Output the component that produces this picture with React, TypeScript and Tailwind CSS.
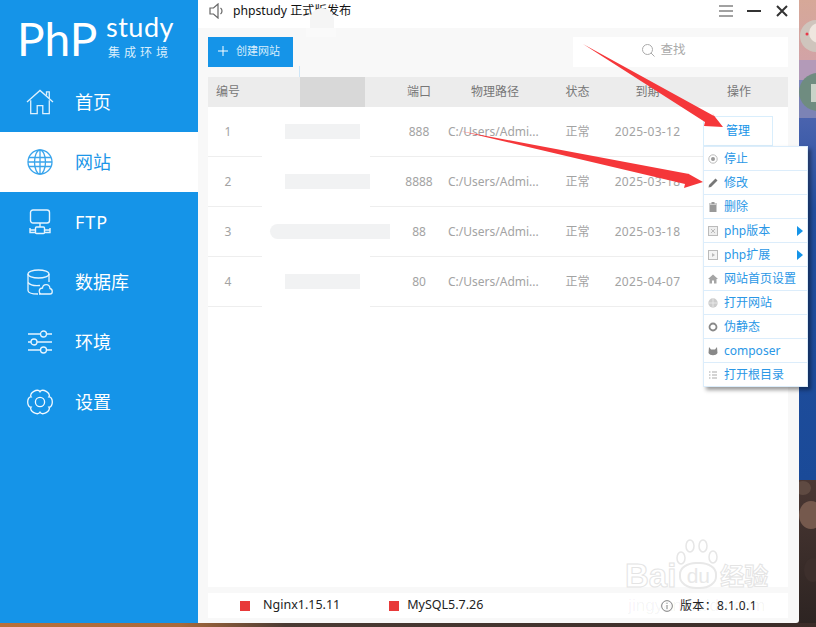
import React from "react";

const cjk = "font-['Noto_Sans','Noto_Sans_CJK_SC',sans-serif]";

const rows = [
  { id: 1, port: "888", date: "2025-03-12", patch: "ml-[37px] w-[75px]" },
  { id: 2, port: "8888", date: "2025-03-18", patch: "ml-[37px] w-[85px]" },
  { id: 3, port: "88", date: "2025-03-18", patch: "ml-[22px] w-[120px] rounded-l-full" },
  { id: 4, port: "80", date: "2025-04-07", patch: "ml-[37px] w-[75px]" },
];

const cols = "grid grid-cols-[40px_150px_42px_110px_55px_85px_98px] items-center";

function HomeIcon() {
  return (
    <svg width="28" height="26" viewBox="0 0 30 28" fill="none" stroke="#dff1fd" strokeWidth="1.4">
      <path d="M1 14 L15 1.5 L29 14" />
      <path d="M22 7 V3 H25 V10" />
      <path d="M5 12 V26.5 H12 V18 H18 V26.5 H25 V12" />
    </svg>
  );
}

function GlobeIcon() {
  return (
    <svg width="26" height="26" viewBox="0 0 26 26" fill="none" stroke="#3aa5ec" strokeWidth="1.3">
      <circle cx="13" cy="13" r="12" />
      <ellipse cx="13" cy="13" rx="5.5" ry="12" />
      <path d="M13 1 V25 M2 8.5 H24 M1 13 H25 M2 17.5 H24" />
    </svg>
  );
}

function FtpIcon() {
  return (
    <svg width="22" height="26" viewBox="0 0 22 26" fill="none" stroke="#e6f4fe" strokeWidth="1.4">
      <rect x="1.5" y="1" width="19" height="13" rx="2.5" />
      <path d="M11 14 V18" />
      <rect x="6.5" y="18" width="9" height="6.5" rx="1" />
      <path d="M6.5 21 H1 M15.5 21 H21" />
      <path d="M1 19 V23.5 H6.5 M21 19 V23.5 H15.5" />
    </svg>
  );
}

function DatabaseIcon() {
  return (
    <svg width="26" height="26" viewBox="0 0 26 26" fill="none" stroke="#e6f4fe" strokeWidth="1.3">
      <ellipse cx="11.5" cy="5" rx="10.5" ry="4" />
      <path d="M1 5 V21.5 C1 23.5 5 25 11 25" />
      <path d="M22 5 V13" />
      <path d="M1 13.5 C3 16 8 17 13 16.5" />
      <path d="M12 25 H23 C26 25 26 20 23 19.5 C22.5 14.5 16 14.5 15.5 19 C11.5 19 11 25 15 25" />
    </svg>
  );
}

function SlidersIcon() {
  return (
    <svg width="26" height="24" viewBox="0 0 26 24" fill="none" stroke="#e6f4fe" strokeWidth="1.3">
      <path d="M1 4 H13 M20 4 H25 M1 12 H4 M10 12 H25 M1 20 H13 M20 20 H25" />
      <circle cx="16.5" cy="4" r="3" />
      <circle cx="7" cy="12" r="3" />
      <circle cx="16.5" cy="20" r="3" />
    </svg>
  );
}

function polar(radius: number, deg: number) {
  const a = (deg * Math.PI) / 180;
  return `${(14 + radius * Math.cos(a)).toFixed(2)} ${(13 + radius * Math.sin(a)).toFixed(2)}`;
}

function GearIcon() {
  const lobes = [0, 60, 120, 180, 240, 300];
  const d =
    `M${polar(10.3, -30)} ` +
    lobes.map((a) => `C${polar(14.5, a - 22)} ${polar(14.5, a + 22)} ${polar(10.3, a + 30)}`).join(" ") +
    " Z";
  return (
    <svg width="28" height="26" viewBox="0 0 28 26" fill="none" stroke="#f2f9ff" strokeWidth="1.3">
      <path d={d} />
      <circle cx="14" cy="13" r="4.6" />
    </svg>
  );
}

const nav = [
  { label: "首页", icon: <HomeIcon /> },
  { label: "网站", icon: <GlobeIcon />, active: true },
  { label: "FTP", icon: <FtpIcon /> },
  { label: "数据库", icon: <DatabaseIcon /> },
  { label: "环境", icon: <SlidersIcon /> },
  { label: "设置", icon: <GearIcon /> },
];

function Sidebar() {
  return (
    <aside className="w-[198px] shrink-0 bg-[#1594e8] text-white">
      <div className="flex h-[72px] pl-[17px]">
        <span className="mt-[11px] w-[89px] text-[46px] leading-[56px] font-['Lato',sans-serif]">PhP</span>
        <div className="flex flex-col">
          <span className="mt-[10px] text-[27px] leading-[34px] tracking-[0.5px] font-['Lato',sans-serif]">study</span>
          <span className={`${cjk} mt-[1px] ml-[2px] text-[12px] leading-[16px] tracking-[4px] text-[#d9eefc]`}>集成环境</span>
        </div>
      </div>
      {nav.map((item) => (
        <div
          key={item.label}
          className={`flex h-[60px] items-center ${item.active ? "bg-white text-[#1b96e8]" : ""}`}
        >
          <div className="flex w-[80px] shrink-0 justify-center pr-[1px]">{item.icon}</div>
          <span className={`${cjk} mt-[1px] -ml-[5px] text-[18px] ${item.label === "FTP" ? "tracking-[1px]" : ""}`}>{item.label}</span>
        </div>
      ))}
    </aside>
  );
}

function TitleBar() {
  return (
    <div className="flex h-[28px] items-center bg-white pb-[6px] pl-[11px]">
      <svg width="15" height="16" viewBox="0 0 15 16" fill="none" stroke="#666" strokeWidth="1.2">
        <path d="M1 5 H4.5 L9 1 V15 L4.5 11 H1 Z" />
        <path d="M11.5 5 C13.5 6.5 13.5 9.5 11.5 11" />
      </svg>
      <span className={`${cjk} ml-[9px] text-[12.2px] text-[#111]`}>phpstudy 正式版发布</span>
      <div className="ml-auto flex items-center pr-[11px]">
        <svg width="14" height="12" viewBox="0 0 14 12" stroke="#444" strokeWidth="1">
          <path d="M0 1 H14 M0 6 H14 M0 11 H14" />
        </svg>
        <div className="ml-[14px] h-[2px] w-[14px] bg-[#333]" />
        <svg className="ml-[15px]" width="12" height="12" viewBox="0 0 12 12" stroke="#333" strokeWidth="2">
          <path d="M1 1 L11 11 M11 1 L1 11" />
        </svg>
      </div>
    </div>
  );
}

function Toolbar() {
  return (
    <div className="flex h-[39px] items-end justify-between">
      <button className={`${cjk} flex h-[30px] w-[85px] items-center bg-[#1594e8] pb-[2px] pl-[10px] text-[11px] text-[#d9eefc]`}>
        <svg width="10" height="10" viewBox="0 0 10 10" stroke="#fff" strokeWidth="1">
          <path d="M5 0 V10 M0 5 H10" />
        </svg>
        <span className="ml-[8px]">创建网站</span>
      </button>
      <div className={`${cjk} flex h-[30px] w-[215px] items-center justify-center gap-[5px] bg-white pr-[33px] pb-[3px] text-[12.5px] text-[#aaa]`}>
        <svg width="13" height="13" viewBox="0 0 13 13" fill="none" stroke="#aaa" strokeWidth="1">
          <circle cx="5.5" cy="5.5" r="5" />
          <path d="M9 9 L12.5 12.5" />
        </svg>
        查找
      </div>
    </div>
  );
}

function Table() {
  return (
    <div className={`${cjk} mt-[10px] flex h-[510px] flex-col bg-white text-[12px] text-[#a3a3a3]`}>
      <div className={`${cols} h-[30px] shrink-0 bg-[#ececec] text-center text-[#777]`}>
        <span>编号</span>
        <span />
        <span>端口</span>
        <span>物理路径</span>
        <span>状态</span>
        <span>到期</span>
        <span>操作</span>
      </div>
      {rows.map((row) => (
        <div key={row.id} className={`${cols} h-[50px] shrink-0 border-b border-[#eeeeee] text-center`}>
          <span>{row.id}</span>
          <span className="relative z-10 flex">
            <span className={`h-[15px] ${row.patch} bg-[#f1f2f3]`} />
          </span>
          <span>{row.port}</span>
          <span className="truncate pr-[4px] pl-[8px] text-left">C:/Users/Admi...</span>
          <span>正常</span>
          <span className="tracking-[0.3px]">{row.date}</span>
          {row.id === 1 ? (
            <span className="mr-[2px] mb-[2px] flex h-[30px] w-[70px] items-center justify-center justify-self-center border border-[#d9eefc] text-[#1594e8]">
              管理
            </span>
          ) : (
            <span />
          )}
        </div>
      ))}
    </div>
  );
}

const greyIcon = { width: 10, height: 10, viewBox: "0 0 10 10", fill: "#999" };

const menu = [
  { label: "停止", icon: <svg {...greyIcon}><circle cx="5" cy="5" r="4.2" fill="none" stroke="#bbb" /><circle cx="5" cy="5" r="2" fill="#999" /></svg> },
  { label: "修改", icon: <svg {...greyIcon}><path d="M0.5 9.5 L1 7 L7.5 0.5 L9.5 2.5 L3 9 Z" fill="#777" /></svg> },
  { label: "删除", icon: <svg {...greyIcon}><path d="M1 1.5 H9 V2.5 H1 Z M3.5 0 H6.5 V1.5 H3.5 Z M1.5 3 H8.5 V10 H1.5 Z" fill="#999" /></svg> },
  { label: "php版本", more: true, icon: <svg {...greyIcon}><rect x="0.5" y="0.5" width="9" height="9" fill="#eee" stroke="#bbb" /><path d="M3 3 L7 7 M7 3 L3 7" stroke="#bbb" /></svg> },
  { label: "php扩展", more: true, icon: <svg {...greyIcon}><rect x="0.5" y="0.5" width="9" height="9" fill="#f4f4f4" stroke="#bbb" /><path d="M4 3 L7 5 L4 7 Z" fill="#bbb" /></svg> },
  { label: "网站首页设置", icon: <svg {...greyIcon}><path d="M0 5 L5 0.5 L10 5 L8.5 5 V9.5 H1.5 V5 Z M4 9.5 H6 V6.5 H4 Z" fill="#a5a5a5" fillRule="evenodd" /></svg> },
  { label: "打开网站", icon: <svg {...greyIcon}><circle cx="5" cy="5" r="4.7" fill="#ccc" /><path d="M0.5 5 H9.5 M5 0.5 V9.5" stroke="#eee" strokeWidth="0.8" /></svg> },
  { label: "伪静态", icon: <svg {...greyIcon}><circle cx="5" cy="5" r="3.5" fill="none" stroke="#888" strokeWidth="1.8" /></svg> },
  { label: "composer", icon: <svg {...greyIcon}><path d="M1 1 L3 3.5 H7 L9 1 L9.5 7 C8 10 2 10 0.5 7 Z" fill="#888" /></svg> },
  { label: "打开根目录", icon: <svg {...greyIcon}><path d="M1 2 H2.5 M4 2 H9 M1 5 H2.5 M4 5 H9 M1 8 H2.5 M4 8 H9" stroke="#aaa" strokeWidth="1.2" /></svg> },
];

function ContextMenu() {
  return (
    <div className={`${cjk} absolute top-[146px] left-[703px] w-[105px] bg-white text-[12px] text-[#2a97e6] shadow-[3px_3px_4px_rgba(0,0,0,0.4)]`}>
      {menu.map((item) => (
        <div key={item.label} className="flex h-[24px] items-center border border-t-0 border-[#dcedfb] first:h-[25px] first:border-t">
          <span className="ml-[4px] flex w-[16px] shrink-0 items-center">{item.icon}</span>
          <span>{item.label}</span>
          {item.more && <span className="mr-[4px] ml-auto h-0 w-0 border-y-[5px] border-l-[6px] border-y-transparent border-l-[#1594e8]" />}
        </div>
      ))}
    </div>
  );
}

function StatusBar() {
  return (
    <div className={`${cjk} mt-[6px] flex h-[25px] items-center bg-white text-[12.5px] text-[#222]`}>
      <span className="ml-[32px] h-[10px] w-[10px] bg-[#e83a3a]" />
      <span className="ml-[13px]">Nginx1.15.11</span>
      <span className="ml-[49px] h-[10px] w-[10px] bg-[#e83a3a]" />
      <span className="ml-[8px]">MySQL5.7.26</span>
      <svg className="ml-auto" width="12" height="12" viewBox="0 0 13 13" fill="none" stroke="#777">
        <circle cx="6.5" cy="6.5" r="5.8" />
        <path d="M6.5 5.5 V10 M6.5 3 V4.2" />
      </svg>
      <span className="mr-[31px] ml-[7px] text-[12px] tracking-[0.4px]">版本：8.1.0.1</span>
    </div>
  );
}

// slice of the desktop wallpaper showing beside the window
function Wallpaper() {
  return (
    <svg width="17" height="623" viewBox="0 0 17 623" className="shrink-0">
      <defs>
        <linearGradient id="sky" x1="0" y1="0" x2="0" y2="1">
          <stop offset="0" stopColor="#d6a898" />
          <stop offset="1" stopColor="#d2a3a6" />
        </linearGradient>
        <linearGradient id="sea" x1="0" y1="0" x2="0" y2="1">
          <stop offset="0" stopColor="#4a63ae" />
          <stop offset="0.25" stopColor="#234f9f" />
          <stop offset="1" stopColor="#1a4a98" />
        </linearGradient>
        <linearGradient id="rock" x1="0" y1="0" x2="0" y2="1">
          <stop offset="0" stopColor="#4a3733" />
          <stop offset="1" stopColor="#2d2422" />
        </linearGradient>
      </defs>
      <rect width="17" height="60" fill="url(#sky)" />
      <circle cx="17" cy="36" r="16" fill="#cfc5bd" />
      <circle cx="20" cy="33" r="10" fill="#efe6df" />
      <circle cx="8" cy="34" r="1.5" fill="#e8394a" />
      <rect y="60" width="17" height="20" fill="#b39ab8" />
      <rect y="80" width="17" height="40" fill="#7c83b5" />
      <circle cx="19" cy="92" r="19" fill="#6f8c80" />
      <rect x="12" y="84" width="5" height="18" fill="#c9d3c8" />
      <rect y="118" width="17" height="362" fill="url(#sea)" />
      <rect y="480" width="17" height="143" fill="url(#rock)" />
      <ellipse cx="12" cy="515" rx="12" ry="14" fill="#75594d" />
      <ellipse cx="4" cy="488" rx="8" ry="7" fill="#5f4a42" />
      <ellipse cx="14" cy="570" rx="9" ry="12" fill="#3d2f2c" />
    </svg>
  );
}

// red annotation arrows drawn over the screenshot
function Arrows() {
  return (
    <svg className="absolute top-0 left-0" width="816" height="627" viewBox="0 0 816 627" fill="#f5373a">
      <polygon points="583,44 714,116 712,113 723,127 704,126 705,122" />
      <polygon points="460,131 689,174 687,173 703,182 684,188 685,184" />
    </svg>
  );
}

function Watermark() {
  return (
    <div className="absolute top-[559px] left-[625px] flex flex-col items-center font-['Liberation_Sans',sans-serif]">
      <div className="relative flex items-center leading-none">
        <span className="text-[33px] font-bold text-transparent [-webkit-text-stroke:1px_#e4e4e4]">Bai</span>
        <span className="mx-[3px] flex h-[27px] w-[38px] items-center justify-center rounded-[45%] border-2 border-[#e8e8e8] text-[21px] text-[#e8e8e8]">du</span>
        <span className={`${cjk} text-[24px] font-bold text-transparent [-webkit-text-stroke:1px_#e4e4e4]`}>经验</span>
        <svg className="absolute -top-[20px] left-[50px]" width="44" height="30" viewBox="0 0 44 30" fill="none" stroke="#e6e6e6" strokeWidth="1.5">
          <ellipse cx="6" cy="19" rx="4" ry="6" />
          <ellipse cx="15" cy="7" rx="4" ry="6" />
          <ellipse cx="28" cy="7" rx="4" ry="6" />
          <ellipse cx="38" cy="18" rx="4" ry="6" />
        </svg>
      </div>
      <span className="mt-[4px] text-[17px] leading-[20px] text-black/5">jingyan.baidu.com</span>
    </div>
  );
}

// blurred patches left by the person who took the screenshot
function BlurPatches() {
  return (
    <>
      <div className="absolute top-[8px] left-[310px] h-[20px] w-[24px] rounded-t-full bg-[#f5f5f5]" />
      <div className="absolute top-[28px] left-[306px] h-[9px] w-[30px] bg-[#fafafa]" />
      <div className="absolute top-[66px] left-[299px] h-[11px] w-[1px] bg-[#cfe6f7]" />
      <div className="absolute top-[77px] left-[300px] h-[30px] w-[65px] bg-[#d8d8d8]" />
      <div className="absolute top-[107px] left-[262px] h-[200px] w-[108px] bg-white" />
    </>
  );
}

export default function App() {
  return (
    <div className="relative flex h-[627px] w-[816px] flex-col overflow-hidden bg-[#3a2c28]">
      <div className="flex h-[623px] shrink-0">
        <div className="flex w-[799px] shrink-0 overflow-hidden rounded-br-[3px]">
          <Sidebar />
          <main className="flex-1 bg-[#f8f8f8]">
            <TitleBar />
            <div className="pr-[11px] pl-[10px]">
              <Toolbar />
              <Table />
              <StatusBar />
            </div>
          </main>
        </div>
        <Wallpaper />
      </div>
      <div className="h-[4px] bg-[linear-gradient(90deg,#b9703a_0%,#a86a3c_22%,#4a3a33_35%,#3b2c28_100%)]" />
      <BlurPatches />
      <ContextMenu />
      <Arrows />
      <Watermark />
    </div>
  );
}
